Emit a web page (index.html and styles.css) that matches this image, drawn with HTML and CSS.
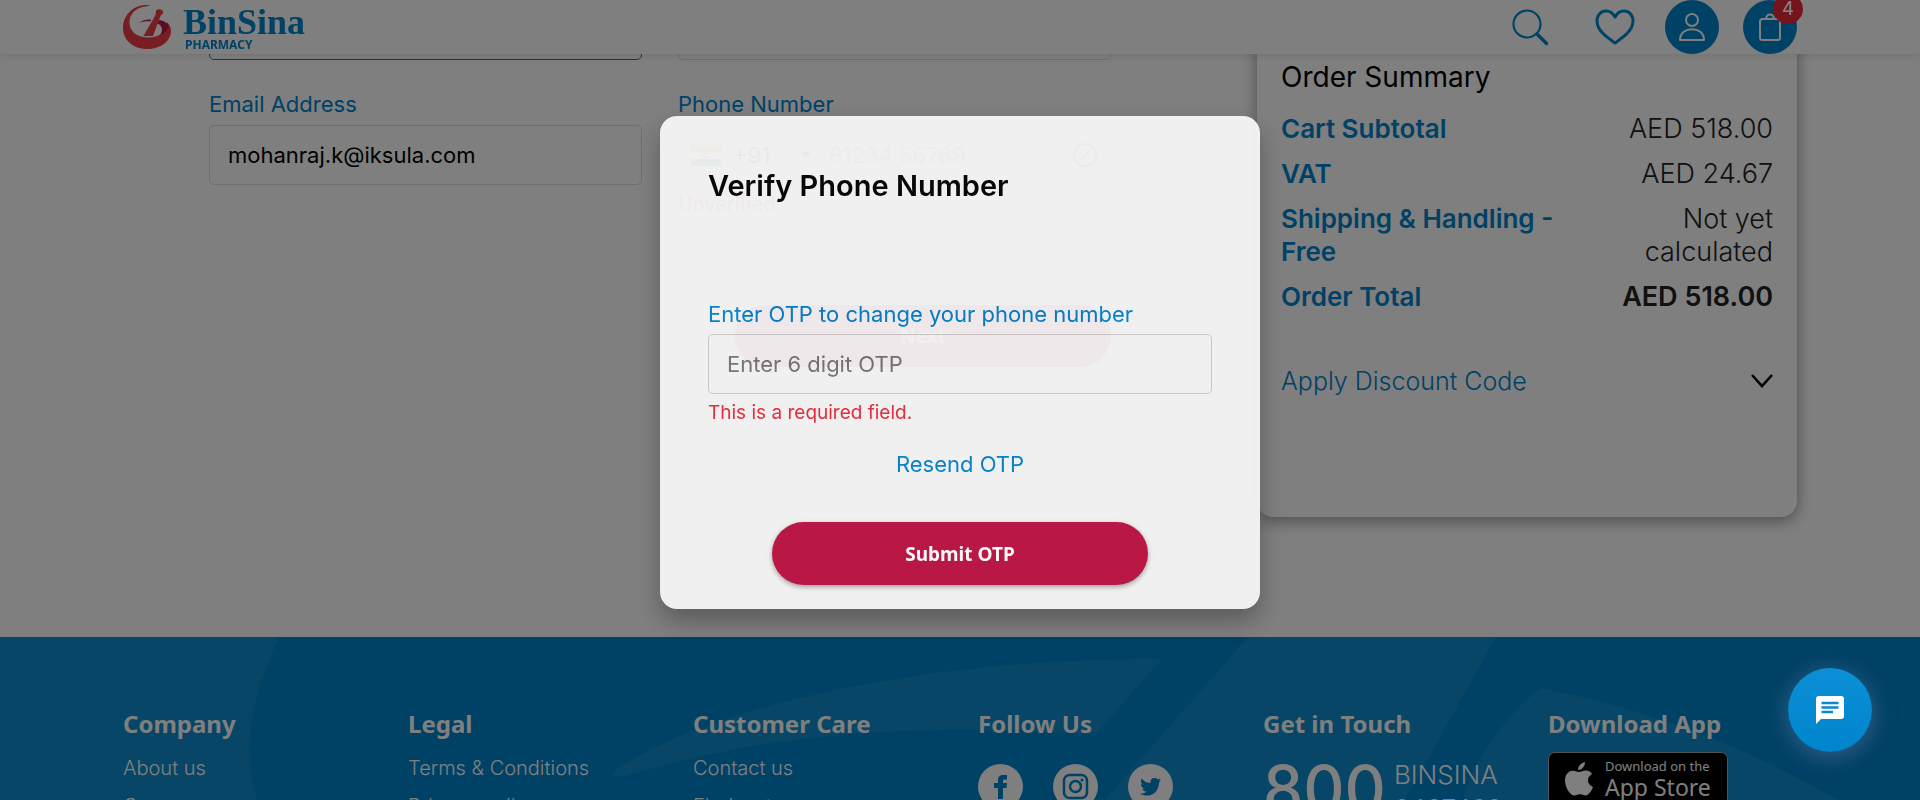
FILE: index.html
```html
<!DOCTYPE html>
<html lang="en">
<head>
<meta charset="utf-8">
<meta name="viewport" content="width=device-width, initial-scale=1">
<title>BinSina Pharmacy - Checkout</title>
<link rel="stylesheet" href="styles.css">
</head>
<body>
<header class="site-header">
  <a class="logo" href="#">
    <svg class="logo-mark" viewBox="0 0 48 44" aria-hidden="true">
      <path fill="#f03a45" d="M22 0C9 1 0 11 0 23C0 35 10 44 24 44C38 44 48 36 48 26C48 22 46 19 44 17C44 26 37 32.500 26 32.500C14 32.500 7 27 6.500 18C6 10 12 3 22 1.500C25 1 27 1 28 1C26 0 24 0 22 0Z"/>
      <path fill="#b01850" d="M16 18C20 15 24 14 28 14.500L27.500 16.500C23 16 20 16.500 16 18ZM36 15C42 16 46 19 45 22C44 26 41 29 37 30C40 26 40 21 34.500 18.500Z"/>
      <path fill="#f03a45" d="M33.500 5C36 3 41 5 40 8C40 9.500 38 9.500 37.500 11L30 31H20.500L32 11C33.500 9 32 7 33.500 5Z"/>
    </svg>
    <span class="logo-text"><span class="logo-name">BinSina</span><span class="logo-sub">PHARMACY</span></span>
  </a>
  <nav class="header-tools" aria-label="Account">
    <button class="tool tool-search" type="button" aria-label="Search">
      <svg width="37" height="37" viewBox="0 0 37 37" fill="none" stroke="#0082cc" stroke-linecap="round"><circle cx="15" cy="15" r="13.500" stroke-width="2.200"/><path d="M25 25L34.500 34.500" stroke-width="3.400"/></svg>
    </button>
    <button class="tool tool-heart" type="button" aria-label="Wish list">
      <svg width="40" height="36" viewBox="0 0 40 36" fill="none" stroke="#0082cc" stroke-width="3" stroke-linejoin="round"><path d="M20 34C13 29 2 22 2 12C2 6 6 2 11 2C15 2 18 4 20 8C22 4 25 2 29 2C34 2 38 6 38 12C38 22 27 29 20 34Z"/></svg>
    </button>
    <a class="tool tool-round" href="#" aria-label="My account">
      <svg width="28" height="28" viewBox="0 0 28 28" fill="none" stroke="#fff" stroke-width="2"><circle cx="14" cy="7" r="6"/><path d="M2 27C2 12.500 26 12.500 26 27Z" stroke-linejoin="round"/></svg>
    </a>
    <a class="tool tool-round" href="#" aria-label="Cart, 4 items">
      <svg width="24" height="28" viewBox="0 0 24 28" fill="none" stroke="#fff" stroke-width="2"><rect x="2" y="6" width="20" height="21" rx="2.500"/><path d="M8 6C8 0 16 0 16 6"/></svg>
      <span class="badge">4</span>
    </a>
  </nav>
</header>

<main class="checkout">
  <form class="details">
    <div class="field"><input class="input input-focus" type="text" aria-label="First Name"></div>
    <div class="field"><input class="input" type="text" aria-label="Last Name"></div>
    <div class="field">
      <label class="label" for="email">Email Address</label>
      <input class="input" id="email" type="email" value="mohanraj.k@iksula.com">
    </div>
    <div class="field">
      <label class="label" for="phone">Phone Number</label>
      <div class="input phone">
        <button class="dial" type="button" aria-label="India +91">
          <svg width="30" height="21" viewBox="0 0 30 21"><path fill="#fff" d="M0 0H30V21H0Z"/><path fill="#f93" d="M0 0H30V7H0Z"/><path fill="#138808" d="M0 14H30V21H0Z"/><circle cx="15" cy="10.500" r="2.500" fill="none" stroke="#008"/></svg>
          <span>+91</span>
          <svg class="caret" width="8" height="6" viewBox="0 0 8 6"><path d="M0 0H8L4 6Z"/></svg>
        </button>
        <input class="phone-input" id="phone" type="tel" placeholder="81234 56789">
        <svg width="26" height="26" viewBox="0 0 26 26" fill="none" stroke="#0082cc" stroke-width="2"><circle cx="13" cy="13" r="11"/><path d="M9 18L18 8"/></svg>
      </div>
      <p class="status">Unverified</p>
    </div>
    <button class="next" type="button">Next</button>
  </form>

  <aside class="summary">
    <h2 class="summary-title">Order Summary</h2>
    <table class="totals">
      <tr><th scope="row">Cart Subtotal</th><td>AED 518.00</td></tr>
      <tr><th scope="row">VAT</th><td>AED 24.67</td></tr>
      <tr><th scope="row">Shipping &amp; Handling - Free</th><td>Not yet calculated</td></tr>
      <tr class="grand"><th scope="row">Order Total</th><td>AED 518.00</td></tr>
    </table>
    <button class="discount" type="button">Apply Discount Code
      <svg width="22" height="14" viewBox="0 0 22 14" fill="none" stroke="#000" stroke-width="2.600"><path d="M1 1L11 12L21 1"/></svg>
    </button>
  </aside>
</main>

<footer class="site-footer">
  <svg class="footer-art" viewBox="0 0 1920 163" preserveAspectRatio="none" aria-hidden="true">
    <g fill="#0e8ccc">
      <path d="M0 0H279C248 68 243 118 257 163H0Z"/>
      <path d="M1162 22C960 20 720 60 613 135C612 139 616 140 625 139C770 95 930 85 1095 98Z"/>
      <path d="M1248 0H1496L1405 163H1105Z"/>
      <path d="M1540 51C1505 80 1475 120 1463 163H1838C1750 112 1650 72 1540 51Z"/>
    </g>
  </svg>
  <section class="foot-col"><h3>Company</h3><a href="#">About us</a><a href="#">Careers</a></section>
  <section class="foot-col"><h3>Legal</h3><a href="#">Terms &amp; Conditions</a><a href="#">Privacy policy</a></section>
  <section class="foot-col"><h3>Customer Care</h3><a href="#">Contact us</a><a href="#">Find a store</a></section>
  <section class="foot-col"><h3>Follow Us</h3>
    <div class="social">
      <a href="#" aria-label="Facebook"><svg viewBox="0 0 45 45"><path fill="#0082cc" d="M20 35V24H16V19H20V16C20 12.500 22 11 25 11H29V15.500H26.500C25.300 15.500 25 16 25 17V19H29L28.500 24H25V35Z"/></svg></a>
      <a href="#" aria-label="Instagram"><svg viewBox="0 0 45 45" fill="none" stroke="#0082cc" stroke-width="2.500"><rect x="11" y="11" width="23" height="23" rx="5.500"/><circle cx="22.500" cy="22.500" r="5.500"/><circle cx="29" cy="16" r="1.500" fill="#0082cc" stroke="none"/></svg></a>
      <a href="#" aria-label="Twitter"><svg viewBox="0 0 45 45"><path fill="#0082cc" d="M33 16C32.200 16.400 31.500 16.600 30.600 16.700C31.500 16.200 32.200 15.300 32.500 14.300C31.700 14.800 30.700 15.200 29.700 15.400C26.700 12.300 21.500 14.600 22.600 19C19 18.900 15.700 17.200 13.500 14.500C12.300 16.600 12.900 19.300 15 20.700C14.200 20.700 13.500 20.400 12.900 20.100C12.900 22.300 14.400 24.200 16.500 24.600C15.800 24.800 15.100 24.800 14.400 24.700C15 26.500 16.700 27.800 18.600 27.800C16.800 29.200 14.500 30 12 29.700C20.500 34.500 31 29.500 31 18.400C31.800 17.800 32.500 17 33 16Z"/></svg></a>
    </div>
  </section>
  <section class="foot-col"><h3>Get in Touch</h3>
    <a class="hotline" href="#"><span class="hot-num">800</span><span class="hot-words">BINSINA<br>2467462</span></a>
  </section>
  <section class="foot-col"><h3>Download App</h3>
    <a class="store" href="#">
      <svg width="28" height="34" viewBox="0 0 28 34" fill="#fff"><path d="M20 0C20 4 17 8 13 8C13 4 16 1 20 0Z"/><path d="M14 10C16 10 18 8.500 21 8.500C23.500 8.500 26 10 27 12C21 15.500 22 22.500 28 25C26.500 29 23.500 33.500 20.500 33.500C18.500 33.500 17.500 32.300 15 32.300C12.500 32.300 11.500 33.500 9.500 33.500C5 33.500 0 25.500 0 18.500C0 12 4 8.700 8 8.700C10.500 8.700 12.500 10 14 10Z"/></svg>
      <span class="store-text"><small>Download on the</small><span>App Store</span></span>
    </a>
  </section>
</footer>

<div class="overlay">
  <form class="modal" role="dialog" aria-labelledby="otp-title">
    <h1 class="modal-title" id="otp-title">Verify Phone Number</h1>
    <label class="label" for="otp">Enter OTP to change your phone number</label>
    <input class="input" id="otp" type="text" placeholder="Enter 6 digit OTP">
    <p class="error">This is a required field.</p>
    <a class="resend" href="#">Resend OTP</a>
    <button class="submit" type="button">Submit OTP</button>
  </form>
</div>

<button class="chat" type="button" aria-label="Open chat">
  <svg width="28" height="28" viewBox="0 0 28 28"><path fill="#fff" d="M3 0H25Q28 0 28 3V20Q28 23 25 23H5L0 28V3Q0 0 3 0Z"/><path stroke="#0689d0" stroke-width="2.400" d="M5.500 7H22.500M5.500 11.500H22.500M5.500 16H17"/></svg>
</button>
</body>
</html>
```
FILE: styles.css
```css
* { box-sizing: border-box; }

body {
  margin: 0;
  height: 100vh;
  overflow: hidden;
  background: #fff;
  color: #000;
  font-family: Inter, "Liberation Sans", sans-serif;
  font-size: 22px;
}

h1, h2, h3, p { margin: 0; }
a { color: inherit; text-decoration: none; }
button, input { font: inherit; color: inherit; }
button { padding: 0; border: 0; background: none; }
svg { display: block; flex: none; }

.site-header {
  position: fixed;
  inset: 0 0 auto;
  z-index: 2;
  display: flex;
  justify-content: space-between;
  height: 54px;
  padding: 0 123px;
  background: #fff;
  box-shadow: 0 2px 8px rgba(0, 0, 0, .1);
}
.logo { display: flex; gap: 12px; padding-top: 5px; }
.logo-mark { width: 48px; height: 44px; }
.logo-text { display: flex; flex-direction: column; color: #0082cc; font-weight: 700; }
.logo-name { font: 700 36px/34px "Liberation Serif", serif; }
.logo-sub { padding-left: 2px; font: 700 12px/12px "Noto Sans", sans-serif; }

.header-tools { display: flex; align-items: center; gap: 24px; }
.tool { position: relative; display: flex; align-items: center; justify-content: center; }
.tool-search { margin-right: 22px; }
.tool-heart { margin-right: 6px; }
.tool-round { width: 54px; height: 54px; border-radius: 50%; background: #0082cc; }
.badge {
  position: absolute;
  top: -6px;
  right: -6px;
  width: 30px;
  height: 30px;
  border-radius: 50%;
  background: #ea2839;
  color: #fff;
  font-size: 18px;
  font-weight: 500;
  line-height: 30px;
  text-align: center;
}

.checkout {
  display: flex;
  justify-content: space-between;
  align-items: flex-start;
  height: 637px;
  padding: 0 123px 0 209px;
}
.details {
  display: grid;
  grid-template-columns: repeat(2, minmax(0, 1fr));
  gap: 28px 36px;
  width: 902px;
}
.label { display: block; color: #0082cc; line-height: 32px; }
.input {
  display: block;
  width: 100%;
  height: 60px;
  padding: 0 18px;
  border: 1px solid #ddd;
  border-radius: 5px;
  background: transparent;
}
.field .label { margin-bottom: 5px; }
.input-focus { border-color: #0082cc; }
.phone { display: flex; align-items: center; padding: 0 12px; }
.dial { display: flex; align-items: center; gap: 12px; width: 138px; }
.caret { margin-left: 20px; }
.phone-input { flex: 1; min-width: 0; padding: 0; border: 0; background: none; }
.phone-input::placeholder { color: #777; }
.status { padding-top: 6px; color: #ea2839; font-size: 20px; line-height: 26px; }
.next {
  grid-column: 2;
  justify-self: end;
  width: 376px;
  height: 62px;
  margin-top: 60px;
  border-radius: 31px;
  background: #bc113f;
  color: #fff;
  font: 700 19px "Noto Sans", sans-serif;
}

.summary {
  width: 540px;
  height: 517px;
  padding: 60px 24px 0;
  border-radius: 16px;
  background: #fff;
  box-shadow: 0 4px 16px rgba(0, 0, 0, .4);
}
.summary-title { font-size: 28px; font-weight: 400; line-height: 34px; }
.totals { width: 100%; margin-top: 12px; border-collapse: collapse; font-size: 26px; line-height: 33px; }
.totals th, .totals td { padding: 6px 0; vertical-align: top; }
.totals th { color: #0082cc; font-weight: 600; text-align: left; }
.totals td { width: 180px; color: #222; font-size: 27px; font-weight: 300; text-align: right; }
.totals .grand td { font-weight: 600; }
.discount {
  display: flex;
  justify-content: space-between;
  align-items: center;
  width: 100%;
  margin-top: 43px;
  color: #0082cc;
  font-size: 25px;
  font-weight: 300;
  line-height: 38px;
}

.site-footer {
  position: relative;
  display: grid;
  grid-template-columns: repeat(6, 1fr);
  gap: 36px;
  height: 163px;
  padding: 68px 123px 0;
  background: #0082cc;
  color: #fff;
  font-size: 20px;
  overflow: hidden;
}
.footer-art { position: absolute; inset: 0; width: 100%; height: 100%; }
.foot-col { position: relative; display: flex; flex-direction: column; min-width: 0; white-space: nowrap; }
.foot-col h3 { margin-bottom: 6px; font: 700 24px/38px "Noto Sans", sans-serif; }
.foot-col > a { line-height: 38px; font-weight: 300; }
.social { display: flex; gap: 30px; padding-top: 15px; }
.social a { width: 45px; height: 45px; border-radius: 50%; background: #fff; }
.foot-col .hotline { display: flex; gap: 8px; padding-top: 9px; }
.hot-num { font-size: 64px; font-weight: 500; line-height: 62px; }
.hot-words { font-size: 26px; line-height: 34px; }
.foot-col .store {
  display: flex;
  align-items: center;
  gap: 12px;
  width: 180px;
  height: 54px;
  margin-top: 3px;
  padding-left: 16px;
  border: 1px solid #a6a6a6;
  border-radius: 7px;
  background: #000;
  font-family: "Noto Sans", sans-serif;
  font-weight: 400;
}
.store-text { display: flex; flex-direction: column; font-size: 23px; line-height: 26px; }
.store-text small { font-size: 13px; line-height: 16px; }

.overlay {
  position: fixed;
  inset: 0;
  z-index: 3;
  display: flex;
  align-items: flex-start;
  justify-content: center;
  padding-top: 116px;
  background: rgba(0, 0, 0, .5);
}
.modal {
  display: flex;
  flex-direction: column;
  width: 600px;
  padding: 52px 48px 24px;
  border-radius: 17px;
  background: #f7f7f7;
  box-shadow: 0 12px 24px rgba(0, 0, 0, .3);
  opacity: .94;
}
.modal-title { margin-bottom: 94px; font-size: 29px; font-weight: 600; line-height: 36px; }
.modal .input { margin-top: 4px; border-color: #ccc; }
.modal .input::placeholder { color: #757575; }
.error { margin-top: 6px; color: #ea2839; font-size: 19px; line-height: 26px; }
.resend { align-self: center; margin-top: 22px; color: #0082cc; line-height: 32px; }
.submit {
  align-self: center;
  width: 376px;
  height: 63px;
  margin-top: 42px;
  border-radius: 32px;
  background: #bc113f;
  box-shadow: 0 2px 5px rgba(0, 0, 0, .35);
  color: #fff;
  font: 700 19px "Noto Sans", sans-serif;
}

.chat {
  position: fixed;
  right: 48px;
  bottom: 48px;
  z-index: 4;
  display: flex;
  align-items: center;
  justify-content: center;
  width: 84px;
  height: 84px;
  border-radius: 50%;
  background: linear-gradient(#0b90d6, #0084cc);
  box-shadow: 0 4px 24px rgba(90, 120, 160, .6);
}
```
